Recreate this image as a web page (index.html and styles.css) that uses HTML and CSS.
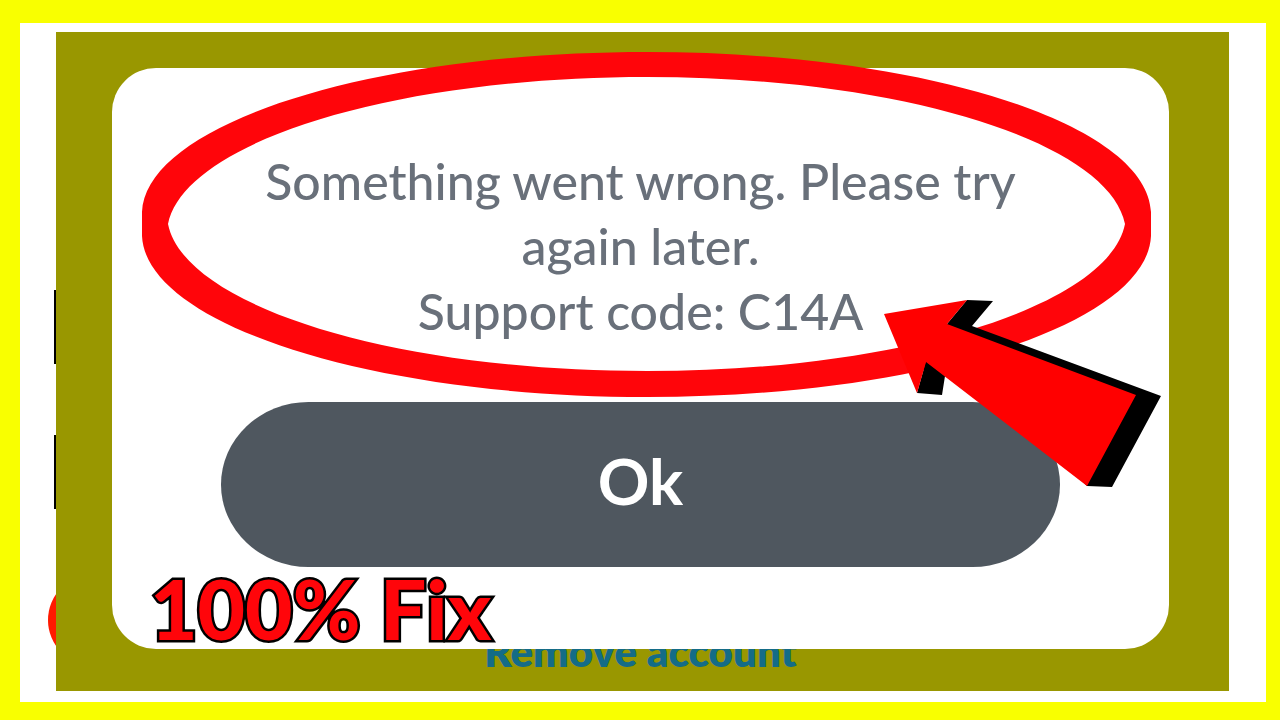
FILE: index.html
```html
<!DOCTYPE html>
<html lang="en">
<head>
    <meta charset="UTF-8">
    <meta name="viewport" content="width=device-width, initial-scale=1.0">
    <title>Support code: C14A - 100% Fix</title>
    <link rel="stylesheet" href="styles.css">
</head>
<body>

    <div class="frame">
        <!-- Page content peeking out on the left -->
        <svg class="layer" viewBox="0 0 1280 720" preserveAspectRatio="none" aria-hidden="true">
            <rect x="54" y="290" width="6" height="74" fill="#000" />
            <rect x="54" y="435" width="6" height="74" fill="#000" />
            <circle cx="94" cy="620" r="46" fill="#ff1a00" />
        </svg>

        <main class="screen">
            <!-- Error Modal -->
            <div class="modal" role="alertdialog" aria-labelledby="message">
                <p class="message" id="message">Something went wrong. Please try<br>again later.<br>Support code: C14A</p>
                <button type="button" class="btn-ok">Ok</button>
            </div>
            <a href="#" class="remove-link">Remove account</a>
        </main>

        <!-- Ellipse and arrow -->
        <svg class="layer layer-top" viewBox="0 0 1280 720" preserveAspectRatio="none" aria-hidden="true">
            <path fill="#ff050a" fill-rule="evenodd" d="M142 212C146 124 370 52 647 52S1147 124 1151 212V236C1147 324 924 397 647 397S146 324 142 236ZM168 224C184 305 390 371 647 371S1109 305 1125 224C1109 143 904 77 647 77S184 143 168 224Z" />
            <path fill="#000" d="M967 300L993 301L972 326L1161 396L1112 487L1087 486L1000 400L945 376L942 395L917 393L926 361L947 324Z" />
            <path fill="#f00" d="M884 314L967 300L947 324L1136 395L1087 486L926 362L917 393Z" />
        </svg>
        <strong class="caption">100% Fix</strong>
    </div>

</body>
</html>
```
FILE: styles.css
```css
* {
    box-sizing: border-box;
}

body {
    margin: 0;
    font-family: Lato, "Open Sans", sans-serif;
    background-color: #fff;
}

.frame {
    position: relative;
    display: flex;
    min-height: 100vh;
    padding: 9px 37px 11px 36px;
    border: solid #f9ff00;
    border-width: 23px 14px 18px 20px;
}

/* Overlays cover the frame together with its border */
.layer {
    position: absolute;
    top: -23px;
    left: -20px;
    width: calc(100% + 34px);
    height: calc(100% + 41px);
    pointer-events: none;
}

.layer-top {
    z-index: 2;
}

/* --- Dimmed screen --- */
.screen {
    position: relative;
    flex: 1;
    display: flex;
    flex-direction: column;
    align-items: center;
    padding: 36px 60px 0 56px;
    background-color: #999700;
}

/* --- Modal --- */
.modal {
    position: relative;
    z-index: 1;
    width: 100%;
    padding: 81px 109px 82px;
    border-radius: 44px;
    background-color: #fff;
    text-align: center;
}

.message {
    margin: 0 0 58px;
    font-size: 50px;
    line-height: 65px;
    font-weight: 500;
    color: #69707a;
    white-space: nowrap;
}

.btn-ok {
    display: block;
    width: 100%;
    padding: 41px 0 48px;
    border: none;
    border-radius: 88px / 83px;
    background-color: #4f575f;
    font-family: inherit;
    font-size: 64px;
    line-height: 76px;
    font-weight: 700;
    color: #fff;
    cursor: pointer;
}

/* Sits half hidden behind the modal */
.remove-link {
    margin-top: -22px;
    font-size: 42px;
    line-height: 48px;
    font-weight: 800;
    color: #146c87;
    text-decoration: none;
}

/* --- Caption --- */
.caption {
    position: absolute;
    z-index: 3;
    left: 130px;
    bottom: 44px;
    font-size: 82px;
    line-height: 100px;
    font-weight: 900;
    color: #ff050a;
    -webkit-text-stroke: 5px #000;
    paint-order: stroke fill;
}
```
